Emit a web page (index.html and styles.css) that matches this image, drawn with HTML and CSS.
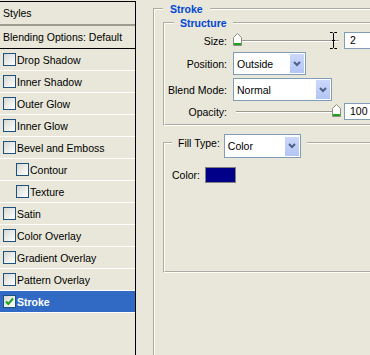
FILE: index.html
```html
<!DOCTYPE html>
<html lang="en">
<head>
    <meta charset="UTF-8">
    <title>Layer Style - Stroke</title>
    <link rel="stylesheet" href="styles.css">
</head>
<body>
    <div class="styles-list">
        <div class="list-header">Styles</div>
        <div class="list-item blending">Blending Options: Default</div>
        <div class="list-item"><span class="check"></span>Drop Shadow</div>
        <div class="list-item"><span class="check"></span>Inner Shadow</div>
        <div class="list-item"><span class="check"></span>Outer Glow</div>
        <div class="list-item"><span class="check"></span>Inner Glow</div>
        <div class="list-item"><span class="check"></span>Bevel and Emboss</div>
        <div class="list-item sub"><span class="check"></span>Contour</div>
        <div class="list-item sub"><span class="check"></span>Texture</div>
        <div class="list-item"><span class="check"></span>Satin</div>
        <div class="list-item"><span class="check"></span>Color Overlay</div>
        <div class="list-item"><span class="check"></span>Gradient Overlay</div>
        <div class="list-item"><span class="check"></span>Pattern Overlay</div>
        <div class="list-item selected">
            <span class="check"><svg width="11" height="11" viewBox="0 0 11 11"><path d="M2 5.5 L4.3 8 L9 2.5" fill="none" stroke="#21a121" stroke-width="2"/></svg></span>Stroke
        </div>
    </div>

    <div class="panel">
        <fieldset class="group outer">
            <legend class="group-title">Stroke</legend>

            <fieldset class="group structure">
                <legend class="group-title">Structure</legend>

                <div class="row row-slider">
                    <span class="field-label">Size:</span>
                    <div class="slider">
                        <div class="track"></div>
                        <svg class="thumb" style="left: 0px" width="9" height="13" viewBox="0 0 9 13"><path d="M0.5 12.5 V4.5 L4.5 0.5 L8.5 4.5 V12.5 Z" fill="#fff" stroke="#8c8c84"/><rect x="1" y="10" width="7" height="2" fill="#1fa31f"/></svg>
                        <svg class="ibeam" width="9" height="17" viewBox="0 0 9 17"><path d="M1 0.5 H3.5 L4.5 1.5 L5.5 0.5 H8 M4.5 1.5 V15.5 M1 16.5 H3.5 L4.5 15.5 L5.5 16.5 H8 M3 8.5 H6" fill="none" stroke="#000"/></svg>
                    </div>
                    <div class="num-input">2</div>
                </div>

                <div class="row row-select">
                    <span class="field-label">Position:</span>
                    <div class="select select-position">
                        <span class="select-text">Outside</span>
                        <span class="select-arrow"><svg width="8" height="6" viewBox="0 0 8 6"><path d="M1 1 L4 4 L7 1" fill="none" stroke="#4d6185" stroke-width="2"/></svg></span>
                    </div>
                </div>

                <div class="row row-select">
                    <span class="field-label">Blend Mode:</span>
                    <div class="select select-blend">
                        <span class="select-text">Normal</span>
                        <span class="select-arrow"><svg width="8" height="6" viewBox="0 0 8 6"><path d="M1 1 L4 4 L7 1" fill="none" stroke="#4d6185" stroke-width="2"/></svg></span>
                    </div>
                </div>

                <div class="row row-slider row-opacity">
                    <span class="field-label">Opacity:</span>
                    <div class="slider">
                        <div class="track"></div>
                        <svg class="thumb" style="left: 99px" width="9" height="13" viewBox="0 0 9 13"><path d="M0.5 12.5 V4.5 L4.5 0.5 L8.5 4.5 V12.5 Z" fill="#fff" stroke="#8c8c84"/><rect x="1" y="10" width="7" height="2" fill="#1fa31f"/></svg>
                    </div>
                    <div class="num-input">100</div>
                </div>
            </fieldset>

            <fieldset class="group fill">
                <legend class="fill-legend">
                    <span class="field-label">Fill Type:</span>
                    <div class="select select-fill">
                        <span class="select-text">Color</span>
                        <span class="select-arrow"><svg width="8" height="6" viewBox="0 0 8 6"><path d="M1 1 L4 4 L7 1" fill="none" stroke="#4d6185" stroke-width="2"/></svg></span>
                    </div>
                </legend>
                <div class="color-row">
                    <span>Color:</span>
                    <span class="swatch"></span>
                </div>
            </fieldset>
        </fieldset>
    </div>
</body>
</html>
```

FILE: styles.css
```css
body {
    margin: 0;
    width: 370px;
    height: 355px;
    overflow: hidden;
    display: flex;
    background-color: #e8e7d9;
    font-family: "Liberation Sans", Arial, sans-serif;
    font-size: 10.5px;
    color: #000;
}

/* left list of effects */
.styles-list {
    width: 135px;
    flex: none;
    margin-top: 1px;
    border-top: 1px solid #000;
    border-right: 1px solid #000;
}
.list-header {
    height: 22px;
    line-height: 22px;
    padding-left: 3px;
    border-bottom: 2px solid #9d9c90;
}
.list-item {
    height: 21px;
    display: flex;
    align-items: center;
    padding-left: 3px;
    border-bottom: 1px solid #fff;
    white-space: nowrap;
}
.list-item.blending { height: 22px; border-bottom-color: #000; }
.list-item.sub { padding-left: 16px; }
.list-item.selected { background-color: #316ac5; color: #fff; font-weight: bold; }
.check {
    width: 13px;
    height: 13px;
    box-sizing: border-box;
    flex: none;
    margin-right: 1px;
    border: 1px solid #1c5180;
    background: linear-gradient(135deg, #d8d8d2, #fff);
    display: flex;
}

/* right panel */
.panel {
    flex: 1;
    min-width: 0;
    padding: 2px 0 0 17px;
    overflow: hidden;
}
.group {
    margin: 0;
    padding: 0;
    min-width: 0;
    border: 2px groove #fffff6;
}
.group-title {
    color: #0046d5;
    font-weight: bold;
    line-height: 14px;
    padding: 0 7px;
}
.outer { padding-left: 8px; margin-right: -30px; height: 400px; }
.structure { padding: 2px 0 4px 0; margin-right: -30px; }
.structure > .group-title { margin-left: 9px; padding: 0 6px; }

.row { display: flex; align-items: center; }
.row-slider { height: 17px; }
.row-select { height: 23px; margin-top: 3px; }
.row-opacity { margin-top: 2px; }
.field-label {
    width: 62px;
    flex: none;
    margin-right: 6px;
    text-align: right;
}

.slider {
    position: relative;
    width: 108px;
    height: 17px;
    margin-right: 3px;
    display: flex;
    align-items: center;
}
.track {
    flex: 1;
    height: 1px;
    margin: 0 2px 0 3px;
    background-color: #9a9a90;
    border-bottom: 1px solid #fff;
}
.thumb { position: absolute; top: 1px; }
.ibeam { position: absolute; left: 96px; top: 0; }

.num-input {
    width: 40px;
    height: 17px;
    flex: none;
    box-sizing: border-box;
    padding-left: 5px;
    line-height: 15px;
    border: 1px solid #7f9db9;
    background-color: #fff;
}

.select {
    height: 23px;
    box-sizing: border-box;
    display: flex;
    align-items: center;
    padding: 1px 1px 1px 3px;
    border: 1px solid #7f9db9;
    background-color: #fff;
}
.select-text { flex: 1; }
.select-arrow {
    width: 14px;
    height: 19px;
    display: flex;
    align-items: center;
    justify-content: center;
    background: linear-gradient(#cbd8fb, #b3c5f4);
}
.select-position { width: 73px; }
.select-blend { width: 99px; }
.select-fill { width: 77px; height: 24px; }

.fill { margin-top: 8px; padding: 16px 0 88px 7px; margin-right: -30px; }
.fill-legend {
    height: 17px;
    display: flex;
    align-items: flex-start;
    padding: 0 6px;
}
.fill-legend .field-label {
    width: auto;
    margin: 1px 4px 0 0;
    line-height: 16px;
}
.color-row { display: flex; align-items: center; gap: 5px; }
.swatch {
    width: 31px;
    height: 16px;
    box-sizing: border-box;
    border: 1px solid #808080;
    background-color: #000088;
}
```
